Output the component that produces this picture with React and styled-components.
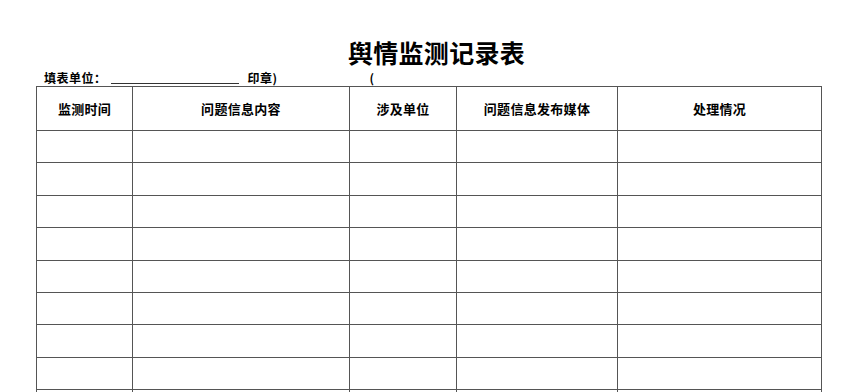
import React from "react"
import styled, { createGlobalStyle } from "styled-components"

const GlobalStyle = createGlobalStyle`
  body {
    margin: 0;
    background: #ffffff;
    font-family: "Noto Sans CJK SC", "Liberation Sans", sans-serif;
    color: #000000;
  }
`

const Page = styled.div`
  width: 851px;
  height: 392px;
  overflow: hidden;
  padding-left: 36px;
  box-sizing: border-box;
`

const Title = styled.h1`
  margin: 38px 0 0;
  width: 785px;
  padding-left: 16px;
  box-sizing: border-box;
  height: 28px;
  line-height: 28px;
  text-align: center;
  font-size: 25px;
  font-weight: 700;
  letter-spacing: 0.3px;
`

const InfoLine = styled.div`
  display: flex;
  align-items: flex-end;
  height: 20px;
  padding: 3px 0 0 8px;
  box-sizing: border-box;
  font-size: 12px;
  font-weight: 700;
  line-height: 17px;
  letter-spacing: 0.5px;
`

const Blank = styled.span`
  display: inline-block;
  width: 128px;
  height: 14px;
  margin: 0 0 2px 4px;
  border-bottom: 1px solid #333333;
`

const InfoText = styled.span`
  margin-left: ${(p) => p.$gap}px;
`

const Table = styled.table`
  border-collapse: collapse;
  table-layout: fixed;
  width: 785px;
`

const HeadCell = styled.th`
  height: 43px;
  padding: 0;
  border: 1px solid #555555;
  font-size: 13px;
  font-weight: 700;
  letter-spacing: 0.3px;
  text-align: center;
  vertical-align: middle;
`

const Cell = styled.td`
  height: 31.4px;
  padding: 0;
  border: 1px solid #555555;
`

const columns = [
  { title: "监测时间", width: 96 },
  { title: "问题信息内容", width: 217 },
  { title: "涉及单位", width: 107 },
  { title: "问题信息发布媒体", width: 161 },
  { title: "处理情况", width: 204 },
]

const rows = Array.from({ length: 9 })

const App = () => {
  return (
    <>
      <GlobalStyle />
      <Page>
        <Title>舆情监测记录表</Title>
        <InfoLine>
          <span>填表单位：</span>
          <Blank />
          <InfoText $gap={9}>印章)</InfoText>
          <InfoText $gap={92}>(</InfoText>
        </InfoLine>
        <Table>
          <colgroup>
            {columns.map((c) => (
              <col key={c.title} style={{ width: c.width }} />
            ))}
          </colgroup>
          <thead>
            <tr>
              {columns.map((c) => (
                <HeadCell key={c.title}>{c.title}</HeadCell>
              ))}
            </tr>
          </thead>
          <tbody>
            {rows.map((_, i) => (
              <tr key={i}>
                {columns.map((c) => (
                  <Cell key={c.title} />
                ))}
              </tr>
            ))}
          </tbody>
        </Table>
      </Page>
    </>
  )
}

export default App
